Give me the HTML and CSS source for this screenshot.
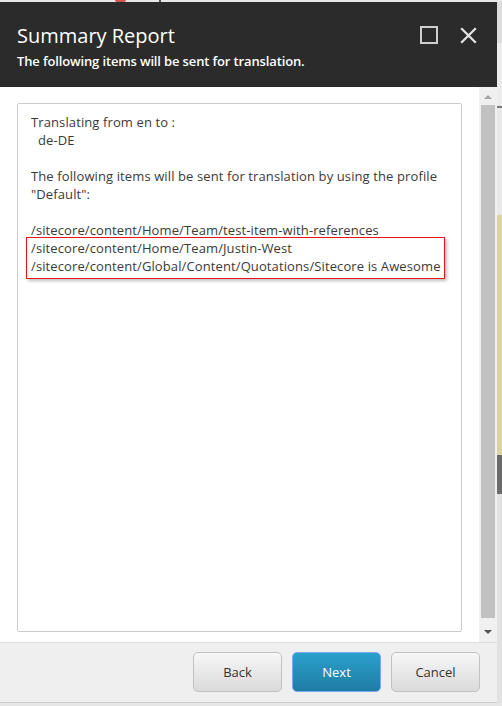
FILE: index.html
```html
<!DOCTYPE html>
<html lang="en">
<head>
<meta charset="utf-8">
<title>Summary Report</title>
<link rel="stylesheet" href="styles.css">
</head>
<body>
<div class="page">
  <div class="topstrip"><span class="blob"></span><span class="tick"></span></div>
  <div class="main">
    <div class="dialog">
      <header class="head">
        <div class="titles">
          <h1 class="title">Summary Report</h1>
          <p class="subtitle">The following items will be sent for translation.</p>
        </div>
        <div class="controls">
          <svg class="icon" width="18" height="18" viewBox="0 0 18 18"><rect x="1" y="1" width="16" height="16" fill="none" stroke="#cfcfcf" stroke-width="2"/></svg>
          <svg class="icon" width="17" height="17" viewBox="0 0 17 17"><path d="M1.2 1.2 L15.8 15.8 M15.8 1.2 L1.2 15.8" stroke="#e2e2e2" stroke-width="2.3" fill="none"/></svg>
        </div>
      </header>
      <div class="body">
        <div class="content">
          <div class="report">
            <p class="line">Translating from en to :</p>
            <p class="line indent">  de-DE</p>
            <p class="line">&nbsp;</p>
            <p class="line">The following items will be sent for translation by using the profile</p>
            <p class="line">"Default":</p>
            <p class="line">&nbsp;</p>
            <p class="line">/sitecore/content/Home/Team/test-item-with-references</p>
            <p class="line">/sitecore/content/Home/Team/Justin-West</p>
            <p class="line">/sitecore/content/Global/Content/Quotations/Sitecore is Awesome</p>
            <div class="mark"></div>
          </div>
        </div>
        <div class="scrollbar">
          <div class="sb-end"><span class="arrow-up"></span></div>
          <div class="thumb"></div>
          <div class="sb-end sb-bottom"><span class="arrow-down"></span></div>
        </div>
      </div>
      <footer class="foot">
        <button class="btn">Back</button>
        <button class="btn btn-primary">Next</button>
        <button class="btn">Cancel</button>
      </footer>
    </div>
    <div class="side">
      <div class="seg s1"></div>
      <div class="seg s2"></div>
      <div class="seg s3"></div>
      <div class="seg s4"></div>
      <div class="seg s5"></div>
      <div class="seg s6"></div>
      <div class="seg s7"></div>
    </div>
  </div>
  <div class="bottomstrip"></div>
</div>
</body>
</html>
```
FILE: styles.css
```css
* { box-sizing: border-box; }
html, body { margin: 0; padding: 0; }
body {
  background: #e6e6e6;
  font-family: "Open Sans", "Noto Sans", "Liberation Sans", sans-serif;
  width: 502px;
  height: 706px;
  overflow: hidden;
}
.page { display: flex; flex-direction: column; height: 706px; }

.topstrip {
  height: 2px;
  background: #e8e8e8;
  display: flex;
  align-items: flex-start;
  overflow: hidden;
}
.blob {
  margin-left: 115px;
  width: 11px;
  height: 2px;
  background: #d9534f;
  border-radius: 0 0 5px 5px;
}
.tick {
  margin-left: 33px;
  width: 2px;
  height: 2px;
  background: #556;
}

.main { display: flex; height: 701px; }
.dialog {
  width: 497px;
  display: flex;
  flex-direction: column;
}

/* header */
.head {
  height: 85px;
  background: #2b2b2b;
  display: flex;
  justify-content: space-between;
  align-items: flex-start;
  padding: 20px 20px 0 17px;
}
.title {
  margin: 0;
  font-size: 20px;
  font-weight: 400;
  line-height: 28px;
  color: #ffffff;
}
.subtitle {
  margin: 2px 0 0;
  font-size: 13px;
  font-weight: 600;
  letter-spacing: -0.14px;
  line-height: 18px;
  color: #ffffff;
}
.controls {
  display: flex;
  align-items: center;
  gap: 22px;
  margin-top: 4px;
}
.icon { display: block; }

/* body */
.body {
  height: 555px;
  display: flex;
  background: #ffffff;
}
.content {
  flex: 1;
  padding: 16px 17px 10px 17px;
  display: flex;
}
.report {
  position: relative;
  flex: 1;
  border: 1px solid #cccccc;
  border-radius: 2px;
  padding: 9px 12px 0 13px;
  color: #3a3a3a;
  font-size: 13px;
  letter-spacing: 0.11px;
  line-height: 18px;
}
.line { margin: 0; white-space: nowrap; }
.indent { white-space: pre; }
.mark {
  position: absolute;
  left: 8px;
  top: 133px;
  width: 419px;
  height: 42px;
  border: 1px solid #e8141b;
  box-shadow: 2px 2px 3px rgba(0,0,0,0.25);
}

/* scrollbar */
.scrollbar {
  width: 18px;
  background: #f0f0f0;
  display: flex;
  flex-direction: column;
  padding: 0 2px;
}
.sb-end {
  height: 18px;
  display: flex;
  justify-content: center;
  align-items: center;
  padding-top: 2px;
}
.sb-bottom { height: 24px; padding-top: 4px; }
.arrow-up {
  width: 0; height: 0;
  border-left: 4px solid transparent;
  border-right: 4px solid transparent;
  border-bottom: 4px solid #a3a3a3;
}
.arrow-down {
  width: 0; height: 0;
  border-left: 4px solid transparent;
  border-right: 4px solid transparent;
  border-top: 4px solid #555555;
}
.thumb {
  flex: 1;
  background: #c1c1c1;
}

/* footer */
.foot {
  height: 61px;
  background: #efefef;
  border-top: 1px solid #dddddd;
  border-bottom: 1px solid #cfcfcf;
  display: flex;
  justify-content: flex-end;
  align-items: flex-start;
  gap: 10px;
  padding: 9px 17px 0 0;
}
.btn {
  width: 89px;
  height: 40px;
  border: 1px solid #c2c2c2;
  border-radius: 5px;
  background: linear-gradient(#f7f7f7, #dadada);
  font-family: "Open Sans", "Noto Sans", "Liberation Sans", sans-serif;
  font-size: 13px;
  color: #333333;
  padding: 0;
}
.btn-primary {
  background: linear-gradient(#2aa0cc, #1e7ca3);
  border-color: #7aa8f2;
  color: #ffffff;
}

/* background page strip on the right */
.side { flex: 1; display: flex; flex-direction: column; }
.seg { flex: none; }
.s1 { height: 41px; background: #dcdcdc; }
.s2 { height: 63px; background: #ececec; }
.s3 { height: 2px; background: #7a7a7a; }
.s4 { height: 107px; background: #e9e9e9; }
.s5 { height: 240px; background: #ddd3a0; }
.s6 { height: 39px; background: #6b6b6b; }
.s7 { flex: 1; background: #e2e2e2; }

.bottomstrip { flex: 1; background: #e6e6e6; }
```
